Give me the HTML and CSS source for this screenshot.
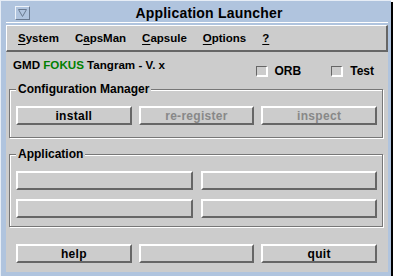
FILE: index.html
```html
<!DOCTYPE html>
<html>
<head>
<meta charset="utf-8">
<link rel="stylesheet" href="styles.css">
</head>
<body>
<div class="win">
  <div class="titlebar">
    <span class="winbtn"><svg width="9" height="8" viewBox="0 0 9 8"><path d="M0.5 0.5 H8.5 L4.5 7.5 Z" fill="none" stroke="#6a7a90" stroke-width="1"/></svg></span>
    <span class="title">Application Launcher</span>
  </div>
  <div class="client">
    <div class="menubar">
      <span class="mi"><u>S</u>ystem</span>
      <span class="mi">C<u>a</u>psMan</span>
      <span class="mi"><u>C</u>apsule</span>
      <span class="mi"><u>O</u>ptions</span>
      <span class="mi"><u>?</u></span>
    </div>
    <div class="content">
      <div class="info">
        <span class="version">GMD <span class="fokus">FOKUS</span> Tangram - V. x</span>
        <div class="checks">
          <label class="check"><span class="box"></span>ORB</label>
          <label class="check"><span class="box"></span>Test</label>
        </div>
      </div>
      <fieldset class="group config">
        <legend>Configuration Manager</legend>
        <div class="row3">
          <button class="btn">install</button>
          <button class="btn dis">re-register</button>
          <button class="btn dis">inspect</button>
        </div>
      </fieldset>
      <fieldset class="group app">
        <legend>Application</legend>
        <div class="grid2">
          <button class="btn"></button>
          <button class="btn"></button>
          <button class="btn"></button>
          <button class="btn"></button>
        </div>
      </fieldset>
      <div class="row3 bottom">
        <button class="btn">help</button>
        <button class="btn"></button>
        <button class="btn">quit</button>
      </div>
    </div>
  </div>
</div>
</body>
</html>
```
FILE: styles.css
```css
html, body {
  margin: 0;
  padding: 0;
  background: #ffffff;
}
body {
  font-family: "Liberation Sans", Arial, sans-serif;
  font-weight: bold;
  font-size: 12px;
  color: #000;
}
.win {
  box-sizing: border-box;
  width: 391px;
  height: 276px;
  background: #b0c4de;
  box-shadow: 2px 2px 0 #000;
  padding: 3px 3px 4px 5px;
  display: flex;
  flex-direction: column;
  border-top: 1px solid #e6edf6;
  border-left: 1px solid #e6edf6;
}
.titlebar {
  box-sizing: border-box;
  height: 19px;
  display: flex;
  align-items: center;
  border-bottom: 1px solid #ffffff;
  margin-bottom: 2px;
}
.winbtn {
  box-sizing: border-box;
  width: 15px;
  height: 14px;
  margin-left: 9px;
  border-top: 1px solid #eef3f9;
  border-left: 1px solid #eef3f9;
  border-bottom: 1px solid #6a7a90;
  border-right: 1px solid #6a7a90;
  display: flex;
  align-items: center;
  justify-content: center;
}
.title {
  flex: 1;
  text-align: center;
  font-size: 14px;
  letter-spacing: 0.2px;
}
.client {
  flex: 1;
  background: #cccccc;
  display: flex;
  flex-direction: column;
}
.menubar {
  box-sizing: border-box;
  height: 27px;
  display: flex;
  align-items: center;
  gap: 16px;
  padding-left: 11px;
  font-size: 11.5px;
  border-top: 1px solid #ffffff;
  border-left: 1px solid #ffffff;
  border-bottom: 2px solid #666666;
  border-right: 2px solid #666666;
}
.mi u {
  text-decoration-thickness: 1px;
  text-underline-offset: 2px;
}
.content {
  flex: 1;
  padding: 0 5px 0 3px;
  display: flex;
  flex-direction: column;
}
.info {
  height: 30px;
  display: flex;
  align-items: flex-start;
  padding-left: 4px;
}
.version {
  margin-top: 6px;
  line-height: 14px;
  font-size: 11.6px;
}
.fokus {
  color: #008000;
}
.checks {
  margin-left: auto;
  margin-right: 9px;
  margin-top: 13px;
  display: flex;
  gap: 30px;
}
.check {
  display: flex;
  align-items: center;
  gap: 7px;
  line-height: 12px;
}
.box {
  box-sizing: border-box;
  width: 12px;
  height: 11px;
  border-top: 1px solid #666;
  border-left: 1px solid #666;
  border-bottom: 2px solid #fff;
  border-right: 2px solid #fff;
  background: #cccccc;
}
.group {
  margin: 0;
  min-width: 0;
  border: 1px solid #777777;
  box-shadow: inset 1px 1px 0 #ffffff, 1px 1px 0 #ffffff;
  padding: 10px 5px 12px 6px;
}
.group legend {
  padding: 0 2px;
  line-height: 14px;
  background: #cccccc;
}
.app {
  margin-top: 9px;
  padding-bottom: 8px;
}
.row3 {
  display: grid;
  grid-template-columns: 1fr 1fr 1fr;
  column-gap: 7px;
}
.grid2 {
  display: grid;
  grid-template-columns: 1fr 1fr;
  column-gap: 8px;
  row-gap: 9px;
}
.bottom {
  margin: 17px 6px 0 7px;
}
.btn {
  box-sizing: border-box;
  height: 19px;
  margin: 0;
  padding: 0;
  background: #cccccc;
  border-top: 2px solid #ffffff;
  border-left: 2px solid #ffffff;
  border-bottom: 2px solid #666666;
  border-right: 2px solid #666666;
  font-family: "Liberation Sans", Arial, sans-serif;
  font-weight: bold;
  font-size: 12px;
  color: #000;
  letter-spacing: 0.3px;
}
.btn.dis {
  color: #888888;
}
```
